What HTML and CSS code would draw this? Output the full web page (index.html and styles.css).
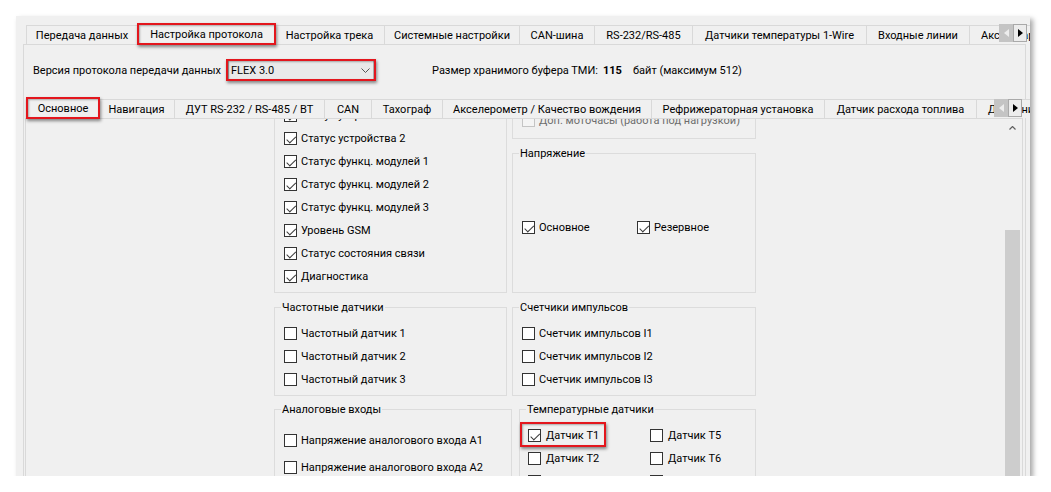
FILE: index.html
```html
<!DOCTYPE html>
<html lang="ru">
<head>
    <meta charset="UTF-8">
    <title>Настройка протокола</title>
    <link rel="stylesheet" href="styles.css">
</head>
<body>
    <div class="window">

        <div class="tabstrip top">
            <div class="tablist">
                <div class="tab w111">Передача данных</div>
                <div class="tab active hl w137">Настройка протокола</div>
                <div class="tab w110">Настройка трека</div>
                <div class="tab w135">Системные настройки</div>
                <div class="tab w75">CAN-шина</div>
                <div class="tab w98">RS-232/RS-485</div>
                <div class="tab w174">Датчики температуры 1-Wire</div>
                <div class="tab w103">Входные линии</div>
                <div class="tab w120 cut">Аксессуары</div>
            </div>
            <div class="arrows">
                <span class="arr off"><span class="tri left"></span></span>
                <span class="arr"><span class="tri right"></span></span>
            </div>
        </div>

        <div class="panel">
            <div class="protoRow">
                <span class="protoLabel">Версия протокола передачи данных</span>
                <div class="combo hl">
                    <span>FLEX 3.0</span>
                    <svg class="chev" width="9" height="5" viewBox="0 0 9 5"><polyline points="0.5,0.5 4.5,4.5 8.5,0.5" fill="none" stroke="#555" stroke-width="1"/></svg>
                </div>
                <span class="bufLabel">Размер хранимого буфера ТМИ:</span>
                <b class="bufValue">115</b>
                <span>байт (максимум 512)</span>
            </div>

            <div class="tabstrip sub">
                <div class="tablist">
                    <div class="tab active hl w72">Основное</div>
                    <div class="tab w76">Навигация</div>
                    <div class="tab w150">ДУТ RS-232 / RS-485 / BT</div>
                    <div class="tab w47">CAN</div>
                    <div class="tab w71">Тахограф</div>
                    <div class="tab w209">Акселерометр / Качество вождения</div>
                    <div class="tab w173">Рефрижераторная установка</div>
                    <div class="tab w152">Датчик расхода топлива</div>
                    <div class="tab w110 cut">Дополнительно</div>
                </div>
                <div class="arrows">
                    <span class="arr off"><span class="tri left"></span></span>
                    <span class="arr"><span class="tri right"></span></span>
                </div>
            </div>

            <div class="subpanel">
                <div class="viewport">
                    <div class="content">

                        <div class="row first">
                            <div class="group status">
                                <div class="cb"><span class="box on"></span>Статус устройства 1</div>
                                <div class="cb"><span class="box on"></span>Статус устройства 2</div>
                                <div class="cb"><span class="box on"></span>Статус функц. модулей 1</div>
                                <div class="cb"><span class="box on"></span>Статус функц. модулей 2</div>
                                <div class="cb"><span class="box on"></span>Статус функц. модулей 3</div>
                                <div class="cb"><span class="box on"></span>Уровень GSM</div>
                                <div class="cb"><span class="box on"></span>Статус состояния связи</div>
                                <div class="cb"><span class="box on"></span>Диагностика</div>
                            </div>
                            <div class="column">
                                <div class="group hours">
                                    <span class="gtitle">Моточасы</span>
                                    <div class="cb disabled"><span class="box"></span>Доп. моточасы (работа под нагрузкой)</div>
                                </div>
                                <div class="group voltage">
                                    <span class="gtitle">Напряжение</span>
                                    <div class="pair">
                                        <div class="cb"><span class="box on"></span>Основное</div>
                                        <div class="cb"><span class="box on"></span>Резервное</div>
                                    </div>
                                </div>
                            </div>
                        </div>

                        <div class="row">
                            <div class="group three">
                                <span class="gtitle">Частотные датчики</span>
                                <div class="cb"><span class="box"></span>Частотный датчик 1</div>
                                <div class="cb"><span class="box"></span>Частотный датчик 2</div>
                                <div class="cb"><span class="box"></span>Частотный датчик 3</div>
                            </div>
                            <div class="group three">
                                <span class="gtitle">Счетчики импульсов</span>
                                <div class="cb"><span class="box"></span>Счетчик импульсов I1</div>
                                <div class="cb"><span class="box"></span>Счетчик импульсов I2</div>
                                <div class="cb"><span class="box"></span>Счетчик импульсов I3</div>
                            </div>
                        </div>

                        <div class="row last">
                            <div class="group analog">
                                <span class="gtitle">Аналоговые входы</span>
                                <div class="cb"><span class="box"></span>Напряжение аналогового входа A1</div>
                                <div class="cb"><span class="box"></span>Напряжение аналогового входа A2</div>
                                <div class="cb"><span class="box"></span>Напряжение аналогового входа A3</div>
                            </div>
                            <div class="group temp">
                                <span class="gtitle">Температурные датчики</span>
                                <div class="tempGrid">
                                    <div class="cb hl"><span class="box on"></span>Датчик T1</div>
                                    <div class="cb"><span class="box"></span>Датчик T5</div>
                                    <div class="cb"><span class="box"></span>Датчик T2</div>
                                    <div class="cb"><span class="box"></span>Датчик T6</div>
                                    <div class="cb"><span class="box"></span>Датчик T3</div>
                                    <div class="cb"><span class="box"></span>Датчик T7</div>
                                </div>
                            </div>
                        </div>

                    </div>
                </div>
                <div class="vscroll">
                    <div class="upBtn">
                        <svg width="7" height="4" viewBox="0 0 7 4"><polyline points="0.5,3.5 3.5,0.5 6.5,3.5" fill="none" stroke="#606060" stroke-width="1.2"/></svg>
                    </div>
                    <div class="thumb"></div>
                </div>
            </div>
        </div>

    </div>
</body>
</html>
```

FILE: styles.css
```css
*{
    box-sizing: border-box;
}
body{
    margin: 0;
    background-color: #ffffff;
    font-family: Roboto, "Noto Sans", sans-serif;
    font-size: 11px;
    color: #000000;
}
.window{
    margin: 16px 0 0 16px;
    width: 1014px;
    height: 460px;
    padding: 8px 4px 0 7px;
    background-color: #f0f0f0;
    overflow: hidden;
    box-shadow: 3px 3px 5px rgba(0, 0, 0, 0.35);
}

/* tabs */
.tabstrip{
    position: relative;
    z-index: 1;
    display: flex;
    height: 20px;
}
.tablist{
    display: flex;
    align-items: flex-end;
    padding-left: 3px;
}
.sub .tablist{
    padding-left: 2px;
}
.tab{
    flex-shrink: 0;
    height: 19px;
    display: flex;
    align-items: center;
    justify-content: center;
    white-space: nowrap;
    border-top: 1px solid #d9d9d9;
    border-right: 1px solid #d9d9d9;
    background-color: #f0f0f0;
}
.tab:first-child{
    border-left: 1px solid #d9d9d9;
}
.tab.cut{
    justify-content: flex-start;
    padding-left: 11px;
}
.tab.active{
    position: relative;
    height: 21px;
    margin-bottom: -1px;
    border-left: 1px solid #d9d9d9;
    padding-bottom: 1px;
}
.w47{ width: 47px; }
.w71{ width: 71px; }
.w72{ width: 72px; }
.w75{ width: 75px; }
.w76{ width: 76px; }
.w98{ width: 98px; }
.w103{ width: 103px; }
.w110{ width: 110px; }
.w111{ width: 112px; }
.w120{ width: 120px; }
.w135{ width: 135px; }
.w137{ width: 137px; }
.w150{ width: 150px; }
.w152{ width: 152px; }
.w173{ width: 173px; }
.w174{ width: 174px; }
.w209{ width: 209px; }

.arrows{
    position: absolute;
    z-index: 2;
    right: -1px;
    top: 0;
    width: 28px;
    height: 18px;
    display: flex;
    background-color: #f0f0f0;
}
.sub .arrows{
    right: 1px;
    top: 1px;
}
.arr{
    flex-shrink: 0;
    width: 14px;
    height: 18px;
    display: flex;
    align-items: center;
    justify-content: center;
    border: 1px solid #a9a9a9;
    background-color: #ececec;
}
.arr.off{
    background-color: #c4c4c4;
    border-color: #c4c4c4;
}
.tri{
    width: 0;
    height: 0;
    border-top: 4px solid transparent;
    border-bottom: 4px solid transparent;
}
.tri.right{
    border-left: 5px solid #000000;
}
.tri.left{
    border-right: 5px solid #ededed;
}

/* red marks */
.hl{
    position: relative;
}
.hl::after{
    content: "";
    position: absolute;
    inset: -2px;
    border: 2px solid #e3161d;
    box-shadow: 1px 2px 3px rgba(0, 0, 0, 0.45), inset 1px 1px 2px rgba(0, 0, 0, 0.3);
    pointer-events: none;
}
.tab.hl::after{
    inset: -2px -2px 0 -2px;
}

/* outer page */
.panel{
    width: 1003px;
    height: 460px;
    border: 1px solid #d9d9d9;
    padding: 0 2px 0 1px;
}
.protoRow{
    display: flex;
    align-items: center;
    height: 20px;
    margin-top: 15px;
    padding-left: 8px;
}
.protoLabel{
    width: 195px;
    white-space: nowrap;
}
.combo{
    width: 146px;
    height: 20px;
    display: flex;
    align-items: center;
    justify-content: space-between;
    padding: 0 3px 0 2px;
    border: 1px solid #adadad;
    background-color: #e9e9e9;
}
.combo::after{
    inset: -2px -3px -2px -3px;
}
.bufLabel{
    margin-left: 58px;
    width: 171px;
    white-space: nowrap;
}
.bufValue{
    width: 30px;
}
.tabstrip.sub{
    margin-top: 18px;
}

/* inner page */
.subpanel{
    display: flex;
    height: 360px;
    border: 1px solid #d9d9d9;
    padding-right: 1px;
}
.viewport{
    flex: 1;
    overflow: hidden;
}
.content{
    width: 482px;
    margin: -24px auto 0;
    display: flex;
    flex-direction: column;
    gap: 14px;
}
.row{
    display: grid;
    grid-template-columns: 233px 244px;
    gap: 5px;
}
.row.last{
    grid-template-columns: 238px 237px;
    gap: 7px;
    margin-top: -1px;
}
.column{
    display: flex;
    flex-direction: column;
    gap: 14px;
}
.group{
    position: relative;
    border: 1px solid #dcdcdc;
    padding: 14px 4px 4px 9px;
}
.gtitle{
    position: absolute;
    top: -8px;
    left: 6px;
    padding: 0 1px;
    line-height: 16px;
    background-color: #f0f0f0;
    white-space: nowrap;
}
.group.status{
    padding-top: 8px;
}
.group.hours{
    padding-top: 13px;
    padding-bottom: 6px;
}
.group.voltage{
    height: 140px;
    padding-top: 62px;
}
.pair{
    display: grid;
    grid-template-columns: 115px 1fr;
}
.group.analog{
    padding-top: 17px;
}
.group.analog .cb{
    height: 27px;
}
.group.temp{
    padding-left: 8px;
}
.tempGrid{
    display: grid;
    grid-template-columns: 122px 1fr;
    justify-items: start;
}
.temp .cb{
    gap: 5px;
}
.temp .cb.hl::after{
    inset: -2px -7px 0 -8px;
}

/* checkboxes */
.cb{
    display: flex;
    align-items: center;
    gap: 4px;
    height: 23px;
    white-space: nowrap;
}
.box{
    position: relative;
    flex-shrink: 0;
    width: 13px;
    height: 13px;
    border: 1px solid #333333;
    background-color: #ffffff;
}
.box.on::after{
    content: "";
    position: absolute;
    left: 3.5px;
    top: 0.5px;
    width: 3.5px;
    height: 7.5px;
    border: solid #3c3c3c;
    border-width: 0 1.3px 1.3px 0;
    transform: rotate(45deg);
}
.cb.disabled{
    color: #6d6d6d;
}
.cb.disabled .box{
    border-color: #c4c4c4;
    background-color: #f4f4f4;
}

/* scrollbar */
.vscroll{
    width: 17px;
    display: flex;
    flex-direction: column;
    background-color: #f0f0f0;
    padding: 0 1px;
}
.upBtn{
    height: 17px;
    display: flex;
    align-items: center;
    justify-content: center;
}
.thumb{
    margin-top: 94px;
    flex: 1;
    background-color: #cdcdcd;
}
```
